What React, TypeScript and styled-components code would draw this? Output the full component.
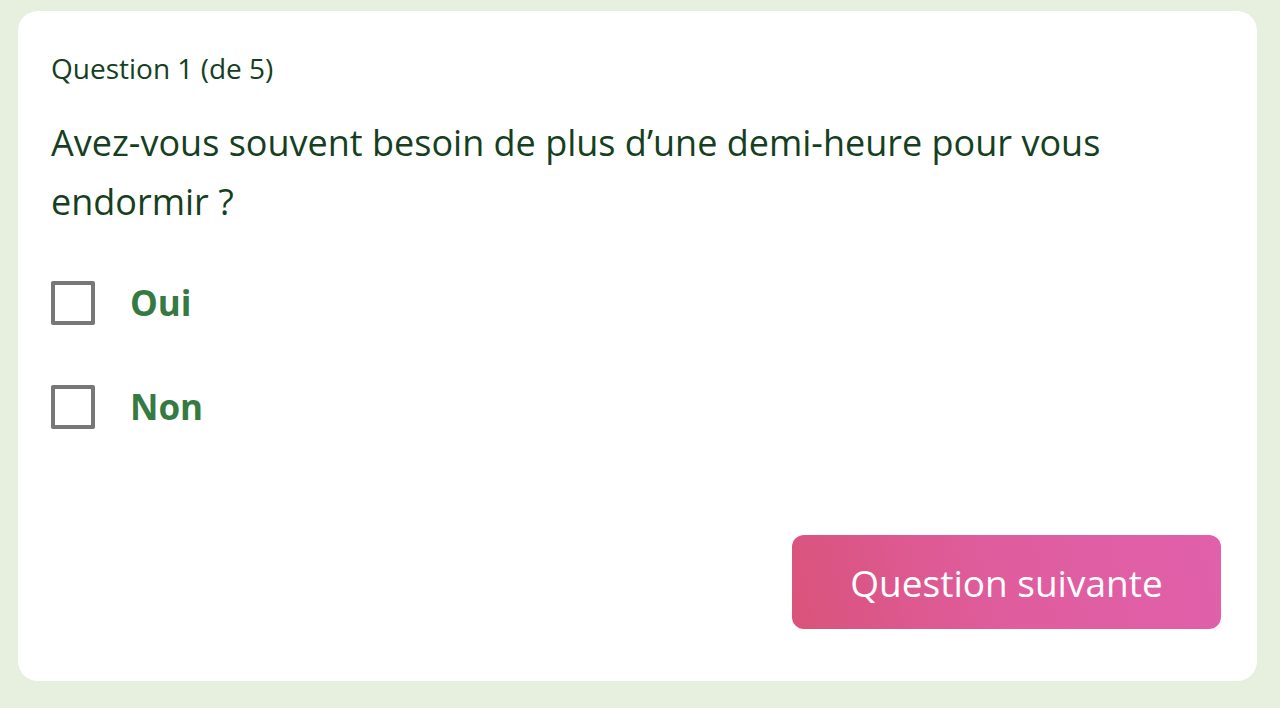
import React, { useState } from "react";
import styled, { createGlobalStyle } from "styled-components";

const GlobalStyle = createGlobalStyle`
  html, body {
    margin: 0;
    padding: 0;
    background: #e7f0df;
  }
  body {
    font-family: "Open Sans", "Noto Sans", sans-serif;
  }
`;

const Page = styled.div`
  width: 1280px;
  height: 708px;
  padding: 11px 23px 27px 18px;
  box-sizing: border-box;
`;

const Card = styled.div`
  height: 100%;
  background: #ffffff;
  border-radius: 20px;
  padding: 39px 36px 52px 33px;
  box-sizing: border-box;
  display: flex;
  flex-direction: column;
`;

const Counter = styled.div`
  font-size: 28px;
  line-height: 36px;
  color: #163f22;
`;

const Question = styled.h2`
  margin: 27px 0 0;
  font-size: 36px;
  font-weight: 400;
  line-height: 59px;
  color: #163f22;
`;

const Options = styled.div`
  display: flex;
  flex-direction: column;
  gap: 60px;
  margin-top: 50px;
`;

const Option = styled.label`
  display: flex;
  align-items: center;
  gap: 35px;
  cursor: pointer;
`;

const Box = styled.span<{ $checked: boolean }>`
  width: 44px;
  height: 44px;
  box-sizing: border-box;
  border: 4px solid #777777;
  border-radius: 2px;
  background: ${(p) => (p.$checked ? "#357a43" : "#ffffff")};
  flex-shrink: 0;
`;

const OptionLabel = styled.span`
  font-size: 35px;
  font-weight: 700;
  color: #357a43;
  line-height: 44px;
`;

const Footer = styled.div`
  margin-top: auto;
  display: flex;
  justify-content: flex-end;
`;

const NextButton = styled.button`
  width: 429px;
  height: 94px;
  border: none;
  border-radius: 12px;
  background: linear-gradient(75deg, #d9537a 0%, #df5c9c 45%, #e060ab 100%);
  color: #ffffff;
  font-family: inherit;
  font-size: 37px;
  cursor: pointer;
`;

const answers = ["Oui", "Non"];

export default function App() {
  const [picked, setPicked] = useState<string | null>(null);
  return (
    <>
      <GlobalStyle />
      <Page>
        <Card>
          <Counter>Question 1 (de 5)</Counter>
          <Question>
            Avez-vous souvent besoin de plus d’une demi-heure pour vous endormir ?
          </Question>
          <Options>
            {answers.map((a) => (
              <Option key={a} onClick={() => setPicked(a)}>
                <Box $checked={picked === a} />
                <OptionLabel>{a}</OptionLabel>
              </Option>
            ))}
          </Options>
          <Footer>
            <NextButton>Question suivante</NextButton>
          </Footer>
        </Card>
      </Page>
    </>
  );
}
